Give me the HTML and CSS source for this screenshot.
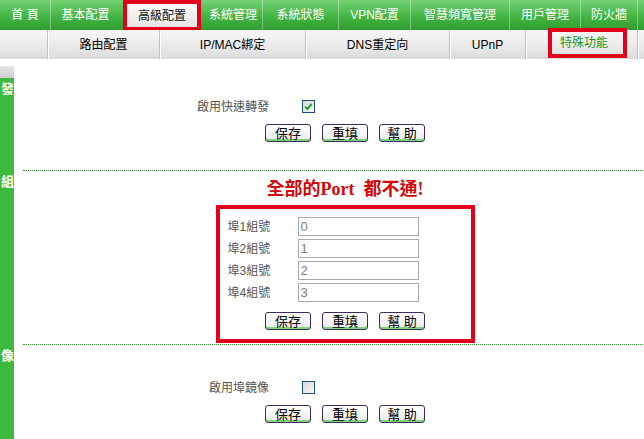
FILE: index.html
```html
<!DOCTYPE html>
<html lang="zh-Hant">
<head>
    <meta charset="UTF-8">
    <meta name="viewport" content="width=device-width, initial-scale=1.0">
    <title>高級配置 - 特殊功能</title>
    <link rel="stylesheet" href="styles.css">
</head>
<body>
<div class="page">
    <ul class="topnav">
        <li class="t-home">首 頁</li>
        <li class="t-basic">基本配置</li>
        <li class="t-adv active">高級配置</li>
        <li class="t-sys">系統管理</li>
        <li class="t-stat">系統狀態</li>
        <li class="t-vpn">VPN配置</li>
        <li class="t-qos">智慧頻寬管理</li>
        <li class="t-user">用戶管理</li>
        <li class="t-fw">防火牆</li>
        <li class="t-rest"></li>
    </ul>

    <ul class="subnav">
        <li class="s-first"></li>
        <li class="s-route">路由配置</li>
        <li class="s-bind">IP/MAC綁定</li>
        <li class="s-dns">DNS重定向</li>
        <li class="s-upnp">UPnP</li>
        <li class="s-special"><span class="current">特殊功能</span></li>
        <li class="s-rest"></li>
    </ul>

    <div class="content">
        <div class="row lead">
            <div class="side"><div class="side-cap"></div></div>
            <div class="main"></div>
        </div>

        <!-- 快速轉發 -->
        <div class="row sec sec-fast">
            <div class="side"><span class="side-label">發</span></div>
            <div class="main">
                <div class="opt">
                    <span class="opt-label">啟用快速轉發</span>
                    <span class="chk">
                        <svg width="11" height="11" viewBox="0 0 11 11"><path d="M2.2 5.6 L4.4 7.9 L8.8 2.8" fill="none" stroke="#1f9e2a" stroke-width="2"/></svg>
                    </span>
                </div>
                <div class="btns">
                    <button type="button">保存</button>
                    <button type="button">重填</button>
                    <button type="button">幫 助</button>
                </div>
            </div>
        </div>

        <!-- 埠分組 -->
        <div class="row sec sec-group">
            <div class="side"><span class="side-label">組</span></div>
            <div class="main">
                <div class="warn">全部的Port&nbsp; 都不通!</div>
                <div class="box">
                    <div class="fields">
                        <div class="field"><label for="g1">埠1組號</label><input type="text" id="g1" value="0"></div>
                        <div class="field"><label for="g2">埠2組號</label><input type="text" id="g2" value="1"></div>
                        <div class="field"><label for="g3">埠3組號</label><input type="text" id="g3" value="2"></div>
                        <div class="field"><label for="g4">埠4組號</label><input type="text" id="g4" value="3"></div>
                    </div>
                    <div class="btns">
                        <button type="button">保存</button>
                        <button type="button">重填</button>
                        <button type="button">幫 助</button>
                    </div>
                </div>
            </div>
        </div>

        <!-- 埠鏡像 -->
        <div class="row sec sec-mirror">
            <div class="side"><span class="side-label">像</span></div>
            <div class="main">
                <div class="opt">
                    <span class="opt-label">啟用埠鏡像</span>
                    <span class="chk"></span>
                </div>
                <div class="btns">
                    <button type="button">保存</button>
                    <button type="button">重填</button>
                    <button type="button">幫 助</button>
                </div>
            </div>
        </div>
    </div>
</div>
</body>
</html>
```

FILE: styles.css
```css
:root {
    --green: #3dba3d;
    --red: #e3001b;
    --text-gray: #555555;
    --font: "Liberation Sans", "Noto Sans CJK TC", sans-serif;
}

html, body {
    margin: 0;
    overflow: hidden;
    background: #ffffff;
}

body {
    font-family: var(--font);
    font-size: 12px;
    color: #111111;
}

.page {
    width: 644px;
    min-height: 100vh;
    display: flex;
    flex-direction: column;
    overflow: hidden;
}

ul {
    list-style: none;
    margin: 0;
    padding: 0;
}

/* top menu */
.topnav {
    display: flex;
    height: 30px;
    background: linear-gradient(#74d174, #44b544 55%, #2f9d2f);
}

.topnav li {
    flex: none;
    display: flex;
    align-items: center;
    justify-content: center;
    color: #ffffff;
    font-size: 12px;
    line-height: 14px;
    border-left: 1px solid rgba(255, 255, 255, 0.35);
    box-sizing: border-box;
}

.t-home { width: 50px; border-left: none !important; }
.t-basic { width: 70px; }
.t-adv { width: 78px; margin: 0 3px; }
.t-sys { width: 58px; border-left: none !important; }
.t-stat { width: 76px; }
.t-vpn { width: 72px; }
.t-qos { width: 99px; }
.t-user { width: 71px; }
.t-fw { width: 57px; }
.t-rest { width: 7px; }

.topnav li.active {
    color: #111111;
    background: linear-gradient(#fbfbfb, #e4e4e4);
    border: 4px solid var(--red);
    height: 31px;
}

/* sub menu */
.subnav {
    display: flex;
    height: 29px;
    background: linear-gradient(#f7f7f7, #e9e9e9 60%, #dadada);
}

.subnav li {
    flex: none;
    display: flex;
    align-items: center;
    justify-content: center;
    font-size: 12px;
    line-height: 14px;
    color: #000000;
    border-left: 1px solid #c2c2c2;
    box-shadow: inset 1px 0 0 #ffffff;
    box-sizing: border-box;
}

.s-first { width: 47px; border-left: none !important; box-shadow: none !important; }
.s-route { width: 112px; }
.s-bind { width: 146px; }
.s-dns { width: 144px; }
.s-upnp { width: 76px; }
.s-special { width: 112px; justify-content: flex-start !important; align-items: flex-start !important; padding-left: 26px; }
.s-rest { width: 7px; }

.current {
    display: block;
    width: 71px;
    height: 22px;
    margin-top: 2px;
    padding-left: 8px;
    box-sizing: border-box;
    line-height: 22px;
    color: #1a9a1a;
    outline: 4px solid var(--red);
}

/* content */
.content {
    flex: 1;
    display: flex;
    flex-direction: column;
}

.row {
    display: flex;
}

.side {
    width: 14px;
    flex: none;
    background: var(--green);
    display: flex;
    justify-content: flex-end;
    align-items: flex-start;
}

.side-label {
    margin-top: 3px;
    color: #ffffff;
    font-weight: bold;
    font-size: 13px;
    line-height: 16px;
}

.main {
    width: 644px;
    flex: none;
    margin-left: 9px;
}

.lead {
    height: 19px;
}

.lead .side {
    background: none;
    align-items: flex-end;
}

.side-cap {
    width: 14px;
    height: 12px;
    background: linear-gradient(#e6e6e6, #cfcfcf);
}

.sec .main {
    border-bottom: 1px dotted #2c9a2c;
}

.sec-fast .main {
    padding: 20px 0 28px;
}

.sec-group .main {
    padding: 6px 0 1px;
}

.sec-mirror {
    flex: 1;
}

.sec-mirror .main {
    padding: 34px 0 20px;
    border-bottom: none;
}

/* option rows */
.opt {
    display: flex;
    align-items: center;
    height: 17px;
}

.opt-label {
    width: 246px;
    text-align: right;
    color: var(--text-gray);
    font-size: 12px;
    line-height: 14px;
}

.chk {
    width: 13px;
    height: 13px;
    margin-left: 33px;
    box-sizing: border-box;
    border: 1px solid #1c5180;
    background: linear-gradient(135deg, #d9d9d9, #f8f8f8);
    display: flex;
    align-items: center;
    justify-content: center;
}

.chk svg {
    display: block;
}

/* buttons */
.btns {
    display: flex;
    justify-content: center;
    gap: 11px;
    margin-top: 9px;
}

button {
    width: 46px;
    height: 18px;
    padding: 0;
    border: 1px solid #3b2b5e;
    border-radius: 3px;
    background: linear-gradient(#ffffff, #eaeaea);
    box-shadow: inset 0 -2px 0 #7ed37e;
    font-family: var(--font);
    font-size: 13px;
    line-height: 15px;
    color: #000000;
    cursor: pointer;
}

/* port groups */
.warn {
    text-align: center;
    font-family: "Liberation Serif", "Noto Sans CJK TC", serif;
    font-weight: bold;
    font-size: 18px;
    line-height: 24px;
    color: #d20a0a;
    margin-bottom: 4px;
}

.box {
    width: 259px;
    box-sizing: border-box;
    margin: 0 auto;
    border: 4px solid var(--red);
    padding: 8px 0 9px;
}

.fields {
    display: flex;
    flex-direction: column;
    gap: 3px;
}

.field {
    display: flex;
    align-items: center;
    height: 19px;
    padding-left: 8px;
}

.field label {
    width: 70px;
    color: var(--text-gray);
    font-size: 12px;
    line-height: 14px;
}

.field input {
    width: 121px;
    height: 19px;
    box-sizing: border-box;
    margin: 0;
    padding: 0 2px;
    border: 1px solid #a9a9a9;
    font-family: var(--font);
    font-size: 13px;
    color: #808080;
    outline: none;
}

.box .btns {
    margin-top: 10px;
}
```
